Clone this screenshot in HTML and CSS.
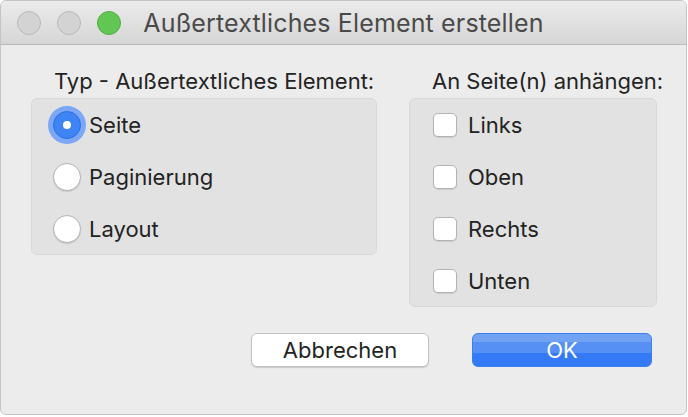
FILE: index.html
```html
<!DOCTYPE html>
<html lang="de">
<head>
<meta charset="utf-8">
<title>Außertextliches Element erstellen</title>
<link rel="stylesheet" href="styles.css">
</head>
<body>
<div class="window">
  <div class="titlebar">
    <div class="lights">
      <span class="light"></span>
      <span class="light"></span>
      <span class="light green"></span>
    </div>
    <div class="title">Außertextliches Element erstellen</div>
    <div class="spacer"></div>
  </div>
  <div class="content">
    <div class="columns">
      <div class="group left">
        <div class="group-label">Typ - Außertextliches Element:</div>
        <div class="box">
          <div class="row"><span class="radio selected"></span><span class="txt">Seite</span></div>
          <div class="row"><span class="radio"></span><span class="txt">Paginierung</span></div>
          <div class="row"><span class="radio"></span><span class="txt">Layout</span></div>
        </div>
      </div>
      <div class="group right">
        <div class="group-label">An Seite(n) anhängen:</div>
        <div class="box">
          <div class="row cb"><span class="check"></span><span class="txt">Links</span></div>
          <div class="row cb"><span class="check"></span><span class="txt">Oben</span></div>
          <div class="row cb"><span class="check"></span><span class="txt">Rechts</span></div>
          <div class="row cb"><span class="check"></span><span class="txt">Unten</span></div>
        </div>
      </div>
    </div>
    <div class="footer">
      <button class="btn cancel">Abbrechen</button>
      <button class="btn ok">OK</button>
    </div>
  </div>
</div>
</body>
</html>
```
FILE: styles.css
```css
* { box-sizing: border-box; }
html, body {
  margin: 0;
  padding: 0;
  background: #ffffff;
}
body {
  font-family: Inter, "Noto Sans", "Liberation Sans", sans-serif;
  color: #232323;
}
.window {
  width: 687px;
  height: 415px;
  border: 1px solid #c4c4c4;
  border-radius: 6px;
  overflow: hidden;
  background: #ececec;
  display: flex;
  flex-direction: column;
}
.titlebar {
  height: 44px;
  flex: none;
  display: grid;
  grid-template-columns: 1fr auto 1fr;
  align-items: center;
  background: linear-gradient(#ebebeb, #d6d6d6);
  border-bottom: 1px solid #b9b9b9;
}
.lights {
  display: flex;
  gap: 16px;
  padding-left: 16px;
}
.light {
  width: 24px;
  height: 24px;
  border-radius: 50%;
  background: #d3d3d3;
  border: 1px solid #b9b9b9;
}
.light.green {
  background: #62c655;
  border-color: #52ad45;
}
.title {
  font-size: 25px;
  color: #4a4a4a;
  line-height: 30px;
  letter-spacing: 0.15px;
}
.content {
  flex: 1;
  padding: 23px 29px 0 30px;
  display: flex;
  flex-direction: column;
}
.columns {
  display: flex;
  gap: 32px;
  align-items: flex-start;
}
.group { flex: none; }
.group.left { width: 346px; }
.group.right { width: 248px; }
.group-label {
  font-size: 22px;
  line-height: 26px;
  padding-left: 23px;
  margin-bottom: 4px;
  white-space: nowrap;
}
.box {
  background: #e2e2e2;
  border: 1px solid #d8d8d8;
  border-radius: 6px;
  padding: 1px 0 0 21px;
  display: flex;
  flex-direction: column;
  gap: 2px;
}
.right .box { padding-left: 23px; }
.row {
  height: 50px;
  display: flex;
  align-items: center;
  gap: 8px;
  font-size: 22px;
}
.row.cb { gap: 11px; }
.radio {
  width: 28px;
  height: 28px;
  border-radius: 50%;
  background: #ffffff;
  border: 1px solid #b3b3b3;
  box-shadow: 0 1px 1px rgba(0,0,0,0.12);
  flex: none;
  display: flex;
  align-items: center;
  justify-content: center;
}
.radio.selected {
  background: #3f84f5;
  border-color: #2a6fe3;
  box-shadow: 0 0 0 5px #7ba7f6;
}
.radio.selected::after {
  content: "";
  width: 8px;
  height: 8px;
  border-radius: 50%;
  background: #ffffff;
}
.check {
  width: 24px;
  height: 24px;
  border-radius: 5px;
  background: #ffffff;
  border: 1px solid #b3b3b3;
  box-shadow: 0 1px 1px rgba(0,0,0,0.1);
  flex: none;
}
.footer {
  display: flex;
  justify-content: flex-end;
  gap: 43px;
  margin-top: 26px;
  padding-right: 5px;
}
.btn {
  font-family: Inter, "Noto Sans", "Liberation Sans", sans-serif;
  font-size: 22px;
  height: 34px;
  border-radius: 6px;
  padding: 0;
  line-height: 32px;
}
.btn.cancel {
  width: 178px;
  background: #ffffff;
  color: #232323;
  border: 1px solid #c3c3c3;
  box-shadow: 0 1px 1px rgba(0,0,0,0.15);
}
.btn.ok {
  width: 180px;
  color: #ffffff;
  border: 1px solid #3a7ef0;
  background: linear-gradient(#72a3f3 0%, #72a3f3 26%, #5690f4 26%, #5690f4 59%, #3479f6 59%, #3479f6 100%);
}
```
